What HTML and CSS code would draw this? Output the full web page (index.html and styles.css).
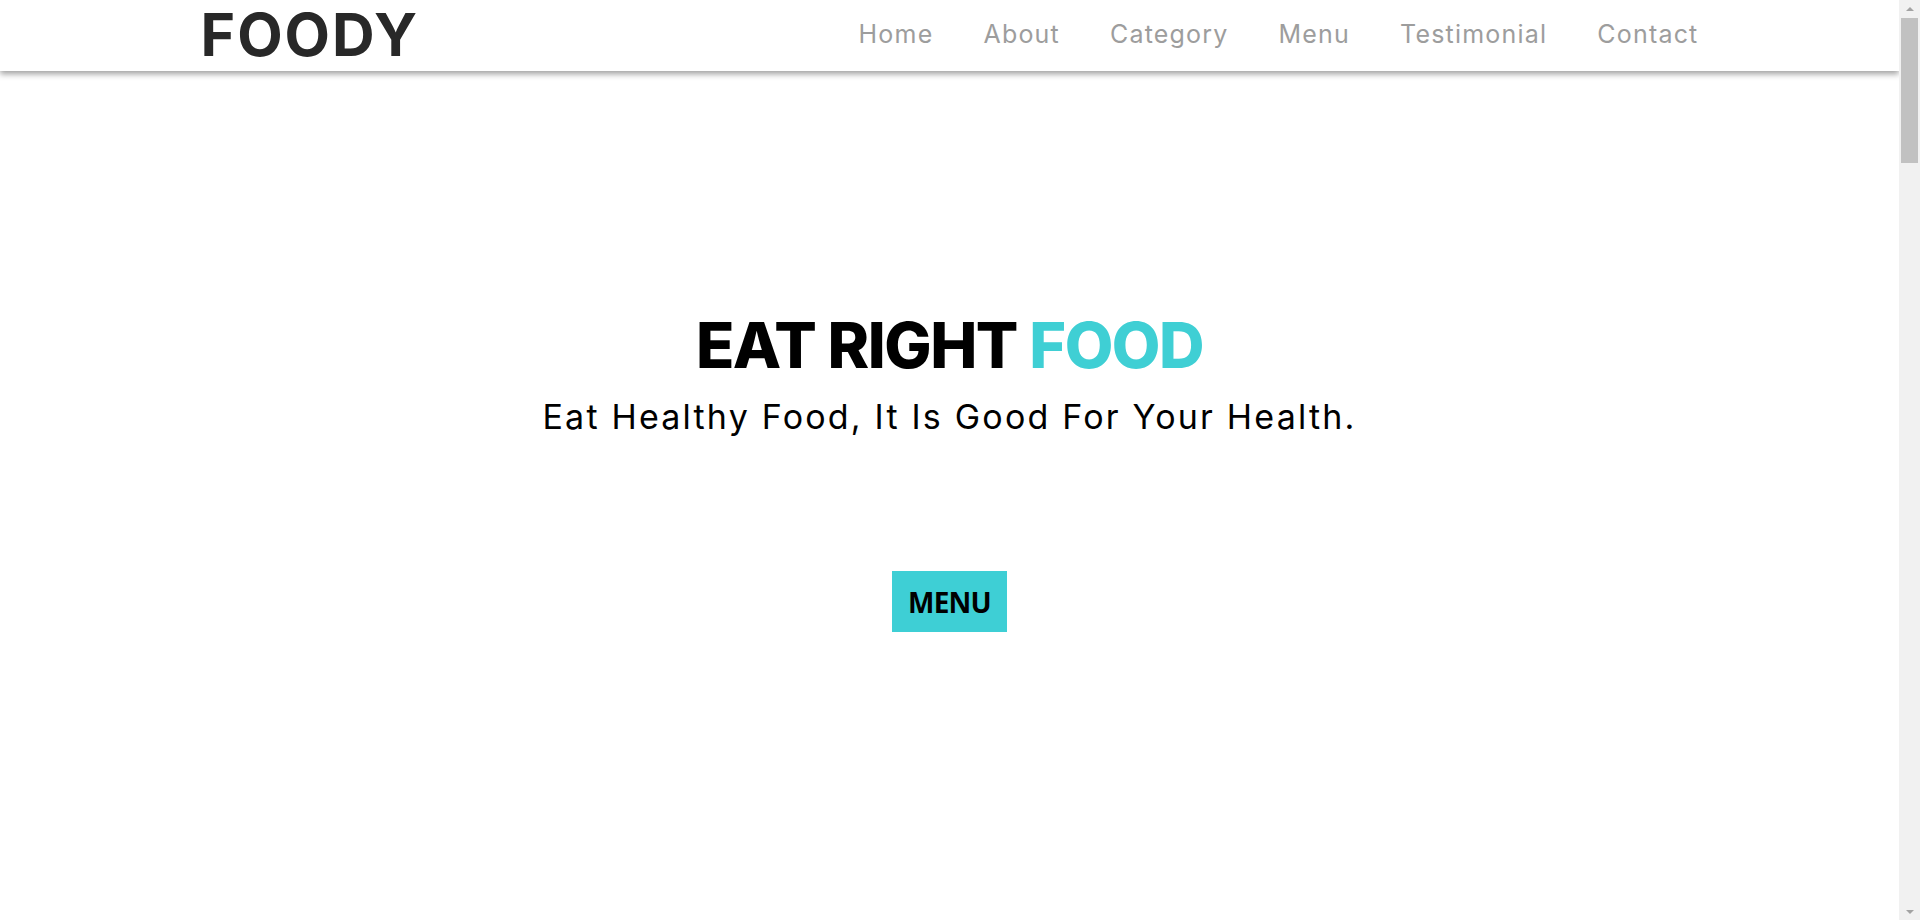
FILE: index.html
```html
<!DOCTYPE html>
<html lang="en">
<head>
<meta charset="utf-8">
<title>Foody</title>
<link rel="stylesheet" href="styles.css">
</head>
<body>
<header class="site-header">
  <div class="container header-inner">
    <a class="logo" href="#">FOODY</a>
    <nav class="nav">
      <a href="#">Home</a>
      <a href="#">About</a>
      <a href="#">Category</a>
      <a href="#">Menu</a>
      <a href="#">Testimonial</a>
      <a href="#">Contact</a>
    </nav>
  </div>
</header>
<main class="page">
  <section class="hero">
    <h1 class="hero-title">EAT RIGHT <span class="accent">FOOD</span></h1>
    <p class="hero-sub">Eat Healthy Food, It Is Good For Your Health.</p>
    <div class="hero-action"><a class="btn" href="#">MENU</a></div>
  </section>
  <section class="rest"></section>
</main>
<div class="scrollbar" aria-hidden="true">
  <div class="sb-btn"><span class="sb-arrow sb-up"></span></div>
  <div class="sb-track"><div class="sb-thumb"></div></div>
  <div class="sb-btn"><span class="sb-arrow sb-down"></span></div>
</div>
</body>
</html>
```
FILE: styles.css
```css
* { box-sizing: border-box; }
html, body { margin: 0; padding: 0; }
body {
  font-family: Inter, "Noto Sans", sans-serif;
  background: #fff;
  color: #000;
  margin-right: 21px;
}
a { text-decoration: none; }

/* page scrollbar (drawn, since the capture hides native scrollbars) */
.scrollbar {
  position: fixed;
  top: 0;
  right: 0;
  width: 21px;
  height: 100vh;
  background: #f1f1f1;
  display: flex;
  flex-direction: column;
  z-index: 10;
}
.sb-btn {
  height: 17px;
  display: flex;
  align-items: center;
  justify-content: center;
}
.sb-arrow {
  width: 0;
  height: 0;
  border-left: 4.5px solid transparent;
  border-right: 4.5px solid transparent;
}
.sb-up { border-bottom: 4.5px solid #a3a3a3; }
.sb-down { border-top: 4.5px solid #a3a3a3; }
.sb-track {
  flex: 1;
  padding: 1px 2px 0;
}
.sb-thumb {
  height: 145px;
  background: #c1c1c1;
}

.site-header {
  height: 71px;
  background: #fff;
  box-shadow: 0 3px 6px rgba(0, 0, 0, 0.38);
  position: relative;
  z-index: 2;
}
.container {
  width: 1498px;
  margin: 0 auto;
}
.header-inner {
  height: 100%;
  display: flex;
  align-items: center;
  justify-content: space-between;
  padding-bottom: 2px;
}
.logo {
  font-size: 59px;
  line-height: 1;
  font-weight: 700;
  color: #282828;
  letter-spacing: 2px;
}
.nav {
  display: flex;
  gap: 50px;
}
.nav a {
  font-size: 25px;
  line-height: 1;
  color: #9d9d9d;
  font-weight: 400;
  letter-spacing: 1.2px;
}

.hero {
  padding-top: 237px;
  text-align: center;
}
.hero-title {
  margin: 0;
  font-size: 63px;
  line-height: 1.2;
  font-weight: 800;
  letter-spacing: -1.5px;
}
.accent { color: #3fcfd4; }
.hero-sub {
  margin: 13px 0 0;
  font-size: 34px;
  line-height: 1.2;
  font-weight: 400;
  letter-spacing: 2.2px;
}
.hero-action {
  margin-top: 134px;
  display: flex;
  justify-content: center;
}
.btn {
  display: flex;
  align-items: center;
  justify-content: center;
  height: 61px;
  padding: 0 16px;
  background: #3ecfd5;
  color: #000;
  font-family: "Open Sans", sans-serif;
  font-weight: 700;
  font-size: 28px;
  letter-spacing: -0.8px;
}
.rest {
  height: 4988px;
}
```
